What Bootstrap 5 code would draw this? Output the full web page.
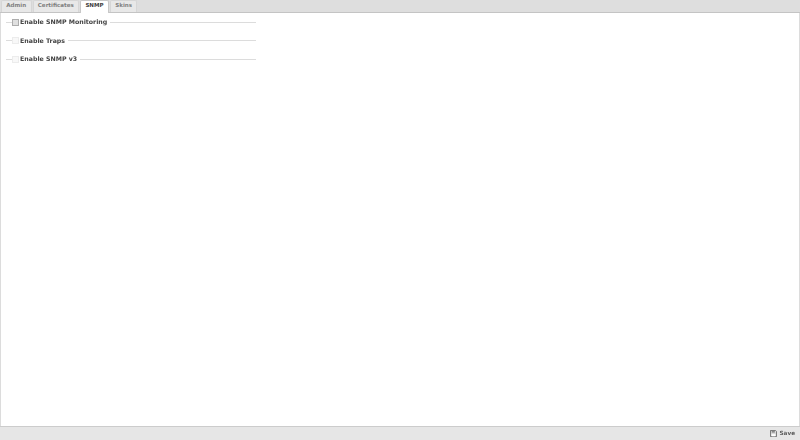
<!DOCTYPE html>
<html lang="en">
<head>
<meta charset="utf-8">
<title>SNMP</title>
<link href="https://cdn.jsdelivr.net/npm/bootstrap@5.3.0/dist/css/bootstrap.min.css" rel="stylesheet">
<style>
html, body { height: 100%; }
body { font-family: "DejaVu Sans", sans-serif; font-size: 7.5px; background: #fff; color: #333; overflow: hidden; }
.shell { height: 440px; border-left: 1px solid #dcdcdc; border-right: 1px solid #dcdcdc; }
.tabbar { height: 13px; background: #dedede; border-bottom: 1px solid #c4c4c4; padding-left: 1px; gap: 1px; margin: 0 -1px; }
.tabitem { height: 12px; padding: 0 4.3px; background: #e8e8e8; border: 1px solid #d6d6d6; border-bottom: 0; border-radius: 2px 2px 0 0; color: #808080; font-weight: 700; font-size: 5.55px; line-height: 9.5px; will-change: opacity; }
.tabitem.on { height: 13px; background: #fff; color: #404040; border-color: #c8c8c8; position: relative; }
.pane { padding: 0 0 0 5px; }
.setrow { width: 250px; height: 18.5px; }
.setrow::before { content: ""; width: 5.5px; border-top: 1px solid #dcdcdc; }
.setrow::after { content: ""; flex: 1; border-top: 1px solid #dcdcdc; }
.tick { width: 7px; height: 7px; margin: 0 1px 0 .5px; border: 1px solid #ececec; background: #f8f8f8; flex: none; }
.tick.on { border-color: #adadad; background: #e0e0e0; }
.setlabel { font-weight: 700; font-size: 6.25px; color: #454545; padding-right: 3px; white-space: nowrap; line-height: 10px; will-change: opacity; }
.footbar { height: 14px; background: #e6e6e6; border-top: 1px solid #cccccc; margin: 0 -1px; padding-right: 5px; }
.savebtn { font-weight: 700; font-size: 5.7px; color: #5a5a5a; gap: 3px; will-change: opacity; }
.savebtn svg { display: block; }
</style>
</head>
<body>
<div class="shell d-flex flex-column">
  <div class="tabbar d-flex align-items-start flex-none">
    <div class="tabitem">Admin</div>
    <div class="tabitem">Certificates</div>
    <div class="tabitem on">SNMP</div>
    <div class="tabitem">Skins</div>
  </div>
  <div class="pane flex-grow-1 pt-0">
    <div class="setrow d-flex align-items-center"><span class="tick on"></span><span class="setlabel">Enable SNMP Monitoring</span></div>
    <div class="setrow d-flex align-items-center"><span class="tick"></span><span class="setlabel">Enable Traps</span></div>
    <div class="setrow d-flex align-items-center"><span class="tick"></span><span class="setlabel">Enable SNMP v3</span></div>
  </div>
  <div class="footbar d-flex justify-content-end align-items-center">
    <div class="savebtn d-flex align-items-center">
      <svg width="7" height="7" viewBox="0 0 8 8"><path d="M.5.5h5.8l1.2 1.2v5.8h-7z" fill="#d8d8d8" stroke="#666"/><rect x="2" y="1" width="3.5" height="2" fill="#888"/><rect x="1.8" y="4.8" width="4.4" height="2.4" fill="#fff"/></svg>
      <span>Save</span>
    </div>
  </div>
</div>
<script src="https://cdn.jsdelivr.net/npm/bootstrap@5.3.0/dist/js/bootstrap.bundle.min.js"></script>
</body>
</html>
